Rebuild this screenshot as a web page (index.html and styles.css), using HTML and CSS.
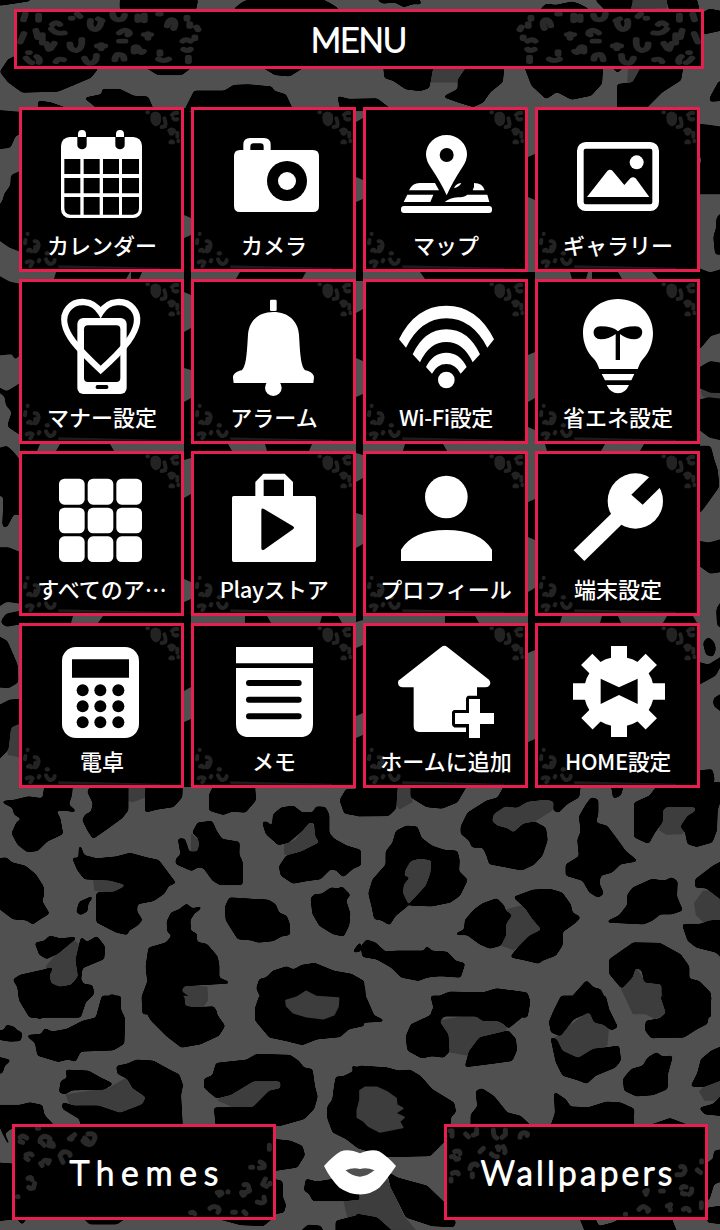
FILE: index.html
```
<!DOCTYPE html>
<html lang="ja">
<head>
    <meta charset="UTF-8">
    <meta name="viewport" content="width=device-width, initial-scale=1.0">
    <title>MENU</title>
    <link rel="stylesheet" href="styles.css">
</head>
<body>
    <!-- leopard wallpaper -->
    <svg class="wallpaper" viewBox="0 0 720 1230" aria-hidden="true">
        <!-- rounds off the corners of the spots -->
        <filter id="soften" x="-5%" y="-5%" width="110%" height="110%" color-interpolation-filters="sRGB">
            <feGaussianBlur stdDeviation="4"/>
            <feComponentTransfer><feFuncA type="linear" slope="7" intercept="-3"/></feComponentTransfer>
        </filter>
        <!-- top -->
        <g transform="scale(.4592 .3333)">
            <path class="mid" d="M1370 0L1455 0 1450 22 1370 25ZM940 207L1020 207 1000 245 940 245ZM1370 207L1400 207 1390 240 1368 250Z"/>
            <path class="spot" d="M264 0L428 0 424 28 264 28ZM512 28L530 8 545 0 700 0 720 14 735 28ZM825 0L835 8 860 4 880 18 900 9 915 10 910 0ZM0 0L65 0 30 8 0 14ZM1180 28L1190 15 1210 18 1245 8 1260 14 1280 28ZM1300 0L1320 28 1370 28 1375 0ZM1455 0L1460 28 1520 28 1515 0ZM1532 40L1545 30 1568 35 1568 90 1532 100Z"/>
            <path class="spot" d="M3 215L20 180 35 170 40 207 210 207 195 232 150 258 125 272 50 275 20 245ZM318 200L415 200 395 222 345 222ZM573 200L660 200 630 226 600 222ZM838 200L940 200 932 262 915 270 885 265 858 240 840 232ZM1020 200L1095 200 1092 245 1065 275 1050 305 1030 318 1000 305 970 290 1000 268 1000 240ZM1145 200L1310 200 1308 250 1285 285 1245 296 1212 272 1190 293 1160 255ZM1335 200L1355 200 1345 214ZM1400 200L1485 200 1480 240 1440 275 1400 330 1347 330 1347 255 1380 250ZM1550 290L1568 245 1568 300 1548 302ZM188 295L225 285 225 270 260 270 290 290 320 292 332 330 220 330ZM405 330L425 275 490 275 510 258 540 256 590 262 595 275 620 285 635 330ZM738 292L760 300 820 298 850 330 745 330ZM86 305L110 310 150 330 86 330Z"/>
        </g>
        <!-- left edge -->
        <g transform="matrix(.3333 0 0 .4656 0 60)">
            <path class="mid" d="M30 1430L57 1420 57 1495 25 1490Z"/>
            <path class="spot" d="M-20 110L67 115 67 155 45 160 30 185 -20 190ZM67 240L35 250 35 270 15 290 10 305 -20 330 -20 375 30 400 67 410ZM-20 460L30 480 67 485 67 625 45 640 40 628 -20 632ZM-20 700L20 715 67 695 67 805 25 785 40 755 20 740 18 722ZM-20 840L20 832 40 845 67 870 67 975 40 972 20 1000 10 1000 14 935 -20 930ZM-20 1050L25 1050 67 1062 67 1165 20 1160 -20 1178ZM5 1207L20 1192 57 1187 95 1195 90 1205 20 1214ZM-20 1235L20 1250 50 1300 52 1335 25 1346 -20 1343ZM-20 1395L30 1377 67 1375 67 1420 30 1430 22 1480 -20 1510Z"/>
        </g>
        <!-- right edge -->
        <g transform="matrix(.3333 0 0 .4656 660 60)">
            <path class="mid" d="M125 705L180 712 180 735 128 720Z"/>
            <path class="spot" d="M108 140L140 142 195 148 195 285 108 285 128 210 108 190ZM195 325L172 340 172 360 163 380 168 415 195 415ZM108 448L150 460 195 450 195 580 150 590 122 615 108 620ZM108 668L150 650 195 655 195 712 150 711 108 698ZM108 735L145 728 195 732 195 815 150 808 108 785ZM90 832L150 832 160 860 170 880 175 915 160 930 140 950 122 968 108 970 108 840ZM108 1035L145 1040 195 1030 195 1095 150 1100 108 1078ZM195 1155L172 1180 174 1213 195 1220ZM132 1252L145 1243 160 1252 165 1265 158 1278 140 1275ZM108 1295L145 1302 195 1280 165 1320 108 1342ZM195 1360L163 1373 163 1385 195 1402ZM108 1530L155 1526 161 1545 150 1570 108 1570Z"/>
        </g>
        <!-- slivers between the tiles -->
        <path class="gap" d="M56 272h74l-4 7h-72zM131 272h11l-3 7h-8zM240 272h66l-4 7h-66zM420 272h115l-5 7h-105zM570 272h18l-2 7h-14zM592 272h26l4 7h-30zM652 272l46 0v7h-40z
            M20 444h20l-3 7h-17zM60 444h50l4 7h-58zM188 444h40l4 7h-44zM265 444h47l-3 7h-42zM405 444h38l4 7h-44zM545 444h60l-4 7h-54zM644 444h56v7h-60z
            M30 616h43l-2 7h-43zM103 616h87v7h-92zM245 616h22l4 7h-26zM322 616h16l4 7h-22zM445 616h30l4 7h-34zM534 616h28l-2 7h-26zM602 616h16l3 7h-21zM667 616h26l4 7h-34z
            M184 108l7 4v106l-7-3zM184 238l7-3v60l-7-3zM184 332l7-4v42l-7-2zM184 402l7-4v60l-7 2zM184 498l7-4v88l-7-3zM184 602l7-3v88l-7 4zM184 722l7-3v68h-7z
            M356 122l7-4v62l-7-3zM356 202l7-3v82h-7zM356 313l7-4v52l-7-3zM356 397l7-3v61l-7-2zM356 482l7-4v37l-7-2zM356 548l7-4v76l-7 2zM356 648l7-3v68l-7 3zM356 738l7-3v53h-7z
            M528 157l7-3v46l-7-3zM528 272h7v80l-7 3zM528 402l7-4v32l-7-3zM528 502l7-3v41l-7-3zM528 592l7-4v62l-7 3zM528 742l7-3v49h-7z"/>
        <!-- lower half, left -->
        <g transform="translate(0 780) scale(.3333)">
            <path class="mid" d="M380 10L445 10 435 50 400 64 380 60ZM282 300L320 292 360 305 385 312 380 322 345 338 285 330ZM855 195L890 180 910 140 935 130 950 165 970 190 900 225 855 222ZM140 560L190 500 220 480 240 500 235 600 205 622 160 622ZM535 615L620 622 622 660 600 690 550 680ZM575 165L598 185 595 215 575 215Z"/>
            <path class="spot" d="M10 66L45 62 85 52 130 58 136 20 215 20 213 45 203 75 224 93 205 90 162 88 178 115 186 160 140 182 112 210 82 213 55 192 38 160 52 128 72 118 45 102 40 82ZM135 10L215 10 205 70 135 70ZM265 35L280 10 382 10 382 90 365 112 320 145 280 173 265 150 250 120 258 105 275 98 282 70ZM440 10L545 10 544 50 520 78 470 86 438 94ZM630 45L645 15 762 15 765 60 735 95 695 92 670 102 630 90ZM1080 30L1040 30 1022 60 1035 98 1080 106ZM-20 240L18 235 35 250 75 260 105 285 128 320 128 352 122 362 145 400 120 415 98 430 80 418 40 415 -20 370ZM240 200L250 228 290 238 350 232 390 222 440 235 475 243 510 290 524 308 505 315 490 340 460 360 410 370 408 395 424 420 410 435 385 450 380 462 350 455 292 425 292 340 345 338 380 320 378 312 330 298 255 295 235 270 220 235 238 238ZM275 352L262 370 260 392 242 402 232 395 240 368ZM537 178L552 178 560 200 565 218 595 218 602 190 595 170 580 158 595 130 635 126 648 155 665 180 716 188 715 225 725 245 725 312 660 312 640 300 612 262 595 258 575 270 530 250 530 238 545 225ZM790 128L802 128 818 150 822 105 845 85 880 80 905 100 940 100 950 82 975 84 985 105 985 160 1000 178 1040 200 1080 212 1080 255 1060 262 1030 288 1010 268 990 265 960 295 920 300 880 308 845 285 840 260 860 230 905 218 965 188 950 170 945 125 925 125 905 150 865 185 835 192 800 160ZM690 355L760 360 805 362 825 375 835 400 858 410 866 430 868 462 845 466 820 480 775 485 755 478 715 475 680 420 678 380ZM935 355L945 345 965 345 995 325 1015 330 1025 322 1048 345 1035 360 1048 400 1045 435 1030 466 1000 460 960 435 940 400ZM560 374L575 388 602 383 580 400 568 420 570 455 588 462 588 488 620 495 650 530 655 555 655 595 685 608 550 615 540 635 570 655 550 660 552 680 600 690 640 682 650 700 430 700 428 650 445 605 440 560 448 505 500 490 520 466 505 455 503 425 515 400 540 390ZM108 490L135 485 150 470 180 478 225 474 170 520 140 534 120 522ZM245 475L260 490 290 472 312 500 310 535 245 562 240 600 250 615 275 618 280 640 255 665 240 710 90 710 60 660 55 620 42 600 60 588 130 572 155 565 145 585 150 612 180 624 215 618 238 590 230 540ZM310 665L335 645 360 655 360 700 310 700ZM1080 490L1062 515 1080 512ZM780 710L788 660 772 625 780 600 800 595 820 575 860 562 880 572 905 558 945 552 1000 575 1055 585 1090 605 1090 710 780 710Z"/>
        </g>
        <!-- lower half, right -->
        <g transform="translate(360 780) scale(.3333)">
            <path class="mid" d="M105 10L155 10 155 65 120 85 102 70ZM392 105L440 78 540 52 582 60 575 90 520 125 460 160 395 140ZM125 310L125 270 160 232 222 235 215 290 160 372 135 365ZM905 85L1012 75 1000 120 965 160 920 162 900 150ZM440 390L500 375 555 445 460 508 425 495ZM1080 330L1030 335 1005 370 1010 405 1035 428 1080 430ZM785 625L825 560 850 600 905 612 910 700 820 700Z"/>
            <path class="spot" d="M-10 10L110 10 105 85 85 105 -10 106ZM155 10L322 10 290 65 245 83 200 78 155 50ZM110 155L140 140 170 142 182 175 215 200 255 213 290 215 296 240 294 275 320 300 310 320 298 345 270 365 215 376 150 374 200 320 215 280 218 238 180 232 150 240 132 270 128 295 145 292 128 312 125 340 142 375 105 405 88 432 65 418 45 415 38 380 28 340 40 300 80 255 80 215 100 190ZM440 10L660 10 655 50 620 70 595 95 583 90 585 62 560 55 500 62 470 80 435 75 398 100 392 125 410 140 440 148 460 162 490 135 525 128 555 145 560 180 545 225 520 252 485 268 390 250 382 225 370 200 338 200 330 180 305 160 305 140 325 100 380 65 415 55ZM755 10L790 10 780 45 762 52ZM695 55L712 60 712 100 705 130 740 140 770 180 795 215 828 242 780 250 755 275 720 285 715 310 728 340 715 350 690 335 670 300 620 285 620 255 660 230 655 180 665 155 660 110 680 75ZM825 70L870 50 900 10 1090 10 1080 60 1070 90 1068 150 1055 185 1010 198 985 190 978 155 965 140 985 110 1010 95 1010 78 920 76 905 90 905 125 880 160 865 188 825 170ZM370 372L410 358 430 378 435 395 452 405 435 430 435 465 420 495 390 503 360 490 322 462 290 462 315 450 318 420 345 390ZM465 352L520 332 570 330 605 340 630 375 635 400 658 412 640 430 605 455 605 495 585 525 545 540 535 548 495 538 455 530 475 505 510 470 550 450 520 415 500 385ZM820 325L875 300 915 305 935 295 950 305 948 350 965 390 935 400 900 400 875 420 850 430 745 425 780 408 805 375 805 345ZM1090 245L1060 260 1008 300 1008 320 1040 322 1090 360ZM970 435L1020 435 1050 425 1090 422 1090 535 1070 515 1010 500 985 480ZM5 500L20 482 45 490 75 518 110 515 195 515 200 502 215 515 260 518 285 545 312 552 300 590 240 585 200 590 175 600 125 590 95 560 50 535 10 528ZM750 540L800 505 820 490 900 492 960 525 985 560 985 598 1015 605 1050 640 1050 710 910 710 908 610 855 604 848 570 825 558 815 590 785 622 750 580ZM-10 600L12 620 15 660 30 700 -10 700ZM215 700L240 650 270 638 370 640 410 628 500 640 508 665 500 710ZM590 700L640 650 680 605 700 625 720 630 735 660 740 710Z"/>
        </g>
        <!-- bottom, left -->
        <g transform="translate(0 1000) scale(.3333)">
            <path class="mid" d="M200 285L330 265 380 235 440 290 430 320 360 345 300 320 210 312ZM550 -10L615 -10 610 20 560 25ZM655 300L690 285 750 240 850 235 850 265 810 275 765 325 700 320ZM1030 590L1080 585 1080 655 1045 655Z"/>
            <path class="spot" d="M75 -10L260 -10 240 30 200 44 160 42 115 54 95 35ZM308 -10L360 -10 360 30 372 55 370 130 340 148 240 152 225 182 205 175 175 183 115 165 108 128 85 108 125 105 135 88 155 98 200 90 250 65 290 55ZM-10 95L15 92 20 78 40 82 48 92 64 100 60 120 30 122 -10 115ZM-10 172L28 182 12 195 5 218 -10 218ZM430 -10L550 -10 552 20 580 25 640 22 652 50 672 78 655 105 600 130 545 140 500 105 455 60 435 25ZM780 -10L1090 -10 1090 75 1045 85 1020 108 950 115 908 132 860 120 810 110 768 60 768 25ZM200 212L265 215 300 235 335 252 310 266 215 268 195 280 180 275 185 245 205 235ZM352 200L380 195 410 182 460 185 505 210 535 225 546 255 540 285 545 375 245 375 240 355 190 325 190 310 220 320 295 320 360 342 430 315 442 290 400 262 385 235 355 220ZM-10 318L60 318 90 310 125 318 130 345 160 378 40 378 10 400 25 430 -10 355ZM615 238L640 228 650 192 740 182 770 165 870 168 895 185 910 205 935 210 942 260 950 290 940 325 910 355 840 375 650 375 645 325 760 325 810 275 845 268 845 240 760 240 690 282 650 292 615 262ZM820 420L870 425 905 440 912 465 890 500 820 510ZM820 540L845 545 845 590 855 615 850 635 820 640ZM920 540L950 548 1000 540 1080 580 1080 595 1030 600 940 600 930 580 915 570ZM-10 490L45 495 45 655 -10 660ZM250 650L380 650 350 670 270 670ZM640 650L820 650 790 675 720 672ZM905 695L925 677 960 680 968 695ZM1010 665L1090 645 1090 700 1010 700ZM50 650L80 650 66 670Z"/>
            <path class="mid" d="M858 2L890 -8 918 -26 950 -10 1016 -6 1014 20 1002 44 970 56 920 50 880 38 860 18Z"/>
        </g>
        <!-- bottom, right -->
        <g transform="translate(360 1000) scale(.3333)">
            <path class="mid" d="M235 65L350 42 440 65 435 100 355 120 325 165 270 155ZM585 115L690 32 745 80 740 135 655 178 600 165ZM815 -10L910 -10 920 40 885 55 850 35ZM1080 245L1040 255 1020 275 1035 300 1060 300 1080 290ZM0 585L80 540 130 650 165 690 80 690 0 645Z"/>
            <path class="spot" d="M-10 -10L15 -10 40 48 68 62 -10 66ZM215 -10L505 -10 490 45 445 82 432 68 410 58 370 60 350 46 250 46 235 65 262 105 265 155 250 170 215 165 185 172 145 150 140 110 155 75 210 50 225 30ZM360 115L445 95 465 118 468 150 455 180 400 188 318 198 330 155ZM605 -10L735 -10 745 30 770 80 755 88 730 70 705 65 690 32 640 55 600 105 575 95 570 65 585 30ZM575 115L588 120 605 155 655 178 700 150 740 145 775 140 780 180 765 200 705 225 680 248 655 238 610 225 590 185ZM905 -10L1052 -10 1040 70 1010 85 970 110 925 110 875 112 858 90 860 65 900 58 922 40ZM-70 232L-50 232 -15 215 -22 200 -8 206 0 200 80 205 115 215 150 212 180 230 215 270 280 310 285 335 270 350 270 370 250 385 250 425 210 465 80 468 -5 442 -40 415 -80 395 -95 355 -95 320 -80 300 -75 260ZM865 175L890 160 905 172 935 170 920 225 920 265 880 282 830 286 795 270 792 238 815 210 850 200ZM1090 140L1055 155 1025 180 1015 220 996 257 1030 258 1090 235ZM1090 285L1060 315 1022 325 1035 340 1090 345ZM350 275L365 268 400 290 440 340 480 350 510 378 335 378 335 345 355 320ZM585 280L615 300 630 322 685 325 740 308 780 310 820 328 818 378 575 378 588 340ZM870 378L930 357 985 378ZM85 520L110 535 200 560 252 610 252 645 285 665 280 678 215 675 140 650 115 600 95 560ZM-10 645L50 655 100 700 -10 700ZM660 650L700 650 715 682 760 670 800 650 930 650 950 700 680 700ZM1045 490L1062 478 1065 455 1090 450 1090 540 1060 550 1045 600ZM1045 625L1090 620 1090 670 1045 665Z"/>
            <path class="mid" d="M-8 330L0 300 0 272 15 262 50 262 80 275 108 295 110 315 128 325 106 340 132 352 118 365 128 382 60 396 25 378 10 362 -8 352Z"/>
        </g>
    </svg>

    <!-- shared corner pattern of the tiles -->
    <svg class="defs" aria-hidden="true">
        <symbol id="tile-spots" viewBox="66 30 477 477">
            <g class="fleck thin">
                <path d="M458 45q8-8 18 0q5 24-8 28q-14-5-10-28M467 50v10M493 55q6 16 2 24l-10 2M516 45q6-8 16-6M520 55q6 6 12 2M508 92q8-6 14 0q-4 12-10 8M532 98v12M511 127q4-6 8 0M535 122v2M442 37h2"/>
                <path d="M83 401v1M76 420l-1 10M104 424q10-2 12 12q-4 20-12 18l2-14M84 452q6-6 10 2M140 460q2-2 4 0M138 478q6 16 16 14q10-4 10-12M80 487q10-6 18 0M94 495l-3 4M118 480l-2 4"/>
            </g>
            <path class="streak" d="M175 496L480 503 480 507 175 505Z"/>
        </symbol>
        <symbol id="bar-spots" viewBox="0 0 420 165" preserveAspectRatio="none">
            <g class="fleck" transform="translate(-37 -36)">
                <path d="M55 42l-4 18M84 45v16M114 74q10-10 16 0M112 88q8 16 28 12M155 55h2M168 42l6 8M197 62q-3 18 5 26q10 6 16-12l2-10M214 57l8 6M245 42q2 18 14 18q10 0 12-14M300 48v14M314 45v18M345 42h4M364 78q2-20 12-18q8 8 2 26M407 52v6M413 72v8M428 82l3 8M424 112v6M52 102l-8 26M78 92l4 22M92 105v26"/>
                <path d="M101 132l5 18M118 132l-8 16M152 134q0 18 14 20q14-5 12-34M260 100q10-14 20-4q4 8-2 10M260 125h12M314 105h14M322 102v14M212 140h16M220 136v12M292 158v-14q10-6 12 14q6 4 8-2M398 125q6-8 16 0M400 150q10 8 14 0M348 157v8M345 180q12 8 22 0M62 160h2M57 177q8 14 12 14M80 172q8 8 5 18M122 188q4-12 16-6M184 177q4 16 12 16q14-2 14-24M250 182q2-18 8-16q12 0 12 14M410 174v14"/>
            </g>
        </symbol>
    </svg>

    <div class="screen">
        <header class="bar">
            <svg class="bar-deco"><use href="#bar-spots"/></svg>
            <svg class="bar-deco flip"><use href="#bar-spots"/></svg>
            <svg class="lettering" width="110" height="54"><text x="7" y="40" textLength="96">MENU</text></svg>
        </header>

        <main class="grid">
            <a class="tile">
                <svg class="deco"><use href="#tile-spots"/></svg>
                <svg class="icon" viewBox="66 30 477 354">
                    <rect x="183" y="111" width="243" height="243" rx="26"/>
                    <path class="cut" d="M193 177h48v45h-48zM251 177h48v45h-48zM309 177h48v45h-48zM366 177h51v45h-51zM193 234h48v46h-48zM251 234h48v46h-48zM309 234h48v46h-48zM366 234h51v46h-51zM193 291h48v53h-30q-18-2-18-20zM251 291h48v53h-48zM309 291h48v53h-48zM366 291h51v33q0 18-18 20h-33z"/>
                    <path class="cut" d="M232 111h28v24a14 13 0 0 1-28 0zM346 111h28v24a14 13 0 0 1-28 0z"/>
                    <path d="M234 111v-9a12 12 0 0 1 24 0v9zM348 111v-9a12 12 0 0 1 24 0v9z"/>
                </svg>
                <span>カレンダー</span>
            </a>
            <a class="tile">
                <svg class="deco"><use href="#tile-spots"/></svg>
                <svg class="icon" viewBox="582 30 477 354">
                    <path d="M702 168q0-18 18-18h10v-16q0-20 20-20h42q20 0 20 20v16h127q18 0 18 18v150q0 18-18 18H720q-18 0-18-18z"/>
                    <path class="cut" d="M751 150v-10q0-10 10-10h20q10 0 10 10v10z"/>
                    <circle class="cut" cx="861" cy="243" r="60"/>
                    <circle cx="861" cy="243" r="27"/>
                </svg>
                <span>カメラ</span>
            </a>
            <a class="tile">
                <svg class="deco"><use href="#tile-spots"/></svg>
                <svg class="icon" viewBox="18 30 477 354">
                    <path d="M147 271q10-22 32-22h46l12 22zM142 284h78l-9 22h-80zM342 249q26 0 32 22h-36q6-10 4-22zM322 284h60l6 22H254q14-12 40-14 18 0 28-8z"/>
                    <rect x="123" y="318" width="273" height="21" rx="9"/>
                    <path d="M260 286q-16-36-48-84-14-20-14-39a61.500 58 0 0 1 123 0q0 19-14 39-30 46-47 84z"/>
                    <path d="M282 265q4-14 22-16-4 10-22 16z"/>
                    <circle class="cut" cx="260" cy="165" r="21"/>
                </svg>
                <span>マップ</span>
            </a>
            <a class="tile">
                <svg class="deco"><use href="#tile-spots"/></svg>
                <svg class="icon" viewBox="534 30 477 354">
                    <rect class="line" x="661" y="136" width="226" height="187" rx="16" stroke-width="20"/>
                    <circle cx="830" cy="187" r="21"/>
                    <path d="M681 291l61-78q8-8 16 0l35 42 18-20q8-7 16 0l41 56z"/>
                </svg>
                <span>ギャラリー</span>
            </a>

            <a class="tile">
                <svg class="deco"><use href="#tile-spots"/></svg>
                <svg class="icon" viewBox="66 546 477 354">
                    <rect x="232" y="654" width="148" height="228" rx="18"/>
                    <rect class="cut" x="252" y="676" width="109" height="170" rx="12"/>
                    <rect class="cut" x="287" y="855" width="38" height="12" rx="5"/>
                    <path class="line" stroke-width="19" d="M302 637C278 598 228 598 205 625C182 652 194 690 220 725C245 757 275 785 302 810C330 785 360 757 384 725C409 690 422 652 399 625C376 598 326 598 302 637Z"/>
                </svg>
                <span>マナー設定</span>
            </a>
            <a class="tile">
                <svg class="deco"><use href="#tile-spots"/></svg>
                <svg class="icon" viewBox="582 546 477 354">
                    <rect x="810" y="599" width="20" height="34" rx="4"/>
                    <path d="M820 636c46 0 74 28 77 68 3 46 4 95 19 107 18 4 26 12 26 22l-2 16H701l-2-16c0-10 8-18 26-22 15-12 16-61 19-107 3-40 30-68 76-68z"/>
                    <circle cx="820" cy="863" r="25"/>
                </svg>
                <span>アラーム</span>
            </a>
            <a class="tile">
                <svg class="deco"><use href="#tile-spots"/></svg>
                <svg class="icon" viewBox="18 546 477 354">
                    <path d="M117 718Q166 617 259 617T402 718L382 743Q336 655 259 655T138 743zM158 763Q193 688 259 688T360 763L338 787Q310 726 259 726T180 787zM198 801Q219 758 259 758T320 801L302 821Q287 792 259 792T216 821z"/>
                    <circle cx="259" cy="840" r="25"/>
                </svg>
                <span class="narrow">Wi-Fi設定</span>
            </a>
            <a class="tile">
                <svg class="deco"><use href="#tile-spots"/></svg>
                <svg class="icon" viewBox="534 546 477 354">
                    <path d="M774 597c60 0 105 45 105 102 0 30-12 60-30 78-8 8-12 20-16 30H718c-4-10-8-22-16-30-20-18-33-48-33-78 0-57 45-102 105-102zM725 822h98l-9 19h-79zM740 855h67q-10 24-33 25-23-1-34-25z"/>
                    <path class="cut" d="M774 694q-16-15-52-15c-30 0-26 39 0 39q24 0 45-16v78h13v-78q20 16 44 16c28 0 32-39 2-39q-36 0-52 15z"/>
                </svg>
                <span>省エネ設定</span>
            </a>

            <a class="tile">
                <svg class="deco"><use href="#tile-spots"/></svg>
                <svg class="icon" viewBox="66 27 477 354">
                    <rect x="177" y="101" width="77" height="78" rx="16"/><rect x="263" y="101" width="77" height="78" rx="16"/><rect x="349" y="101" width="77" height="78" rx="16"/>
                    <rect x="177" y="188" width="77" height="77" rx="16"/><rect x="263" y="188" width="77" height="77" rx="16"/><rect x="349" y="188" width="77" height="77" rx="16"/>
                    <rect x="177" y="274" width="77" height="77" rx="16"/><rect x="263" y="274" width="77" height="77" rx="16"/><rect x="349" y="274" width="77" height="77" rx="16"/>
                </svg>
                <span>すべてのア…</span>
            </a>
            <a class="tile">
                <svg class="deco"><use href="#tile-spots"/></svg>
                <svg class="icon" viewBox="582 27 477 354">
                    <path d="M696 158q0-5 5-5h65v-42l24-25h64l25 25v42h64q5 0 5 5v188q0 5-5 5H701q-5 0-5-5z"/>
                    <path class="cut" d="M791 104h61v49h-61zM784 196q0-8 8-4l87 52q6 4 0 9l-87 61q-8 4-8-4z"/>
                </svg>
                <span class="narrow">Playストア</span>
            </a>
            <a class="tile">
                <svg class="deco"><use href="#tile-spots"/></svg>
                <svg class="icon" viewBox="18 27 477 354">
                    <circle cx="259" cy="156" r="64"/>
                    <path d="M123 348v-34q36-59 136-59t137 59v34z"/>
                </svg>
                <span>プロフィール</span>
            </a>
            <a class="tile">
                <svg class="deco"><use href="#tile-spots"/></svg>
                <svg class="icon" viewBox="534 27 477 354">
                    <circle cx="826" cy="168" r="83"/>
                    <path d="M641 316l125-122 32 32-125 122z"/>
                    <path class="cut" d="M814 149l70-69 36 28-72 71z"/>
                </svg>
                <span>端末設定</span>
            </a>

            <a class="tile">
                <svg class="deco"><use href="#tile-spots"/></svg>
                <svg class="icon" viewBox="66 543 477 354">
                    <rect x="186" y="606" width="231" height="273" rx="42"/>
                    <path class="cut" d="M216 643h171v55H216z"/>
                    <g class="cut">
                        <circle cx="248" cy="736" r="18"/><circle cx="301" cy="736" r="18"/><circle cx="355" cy="736" r="18"/>
                        <circle cx="248" cy="784" r="18"/><circle cx="301" cy="784" r="18"/><circle cx="355" cy="784" r="18"/>
                        <circle cx="248" cy="832" r="18"/><circle cx="301" cy="832" r="18"/><circle cx="355" cy="832" r="18"/>
                    </g>
                </svg>
                <span>電卓</span>
            </a>
            <a class="tile">
                <svg class="deco"><use href="#tile-spots"/></svg>
                <svg class="icon" viewBox="582 543 477 354">
                    <path d="M708 606h231v49H708zM708 669h231v167q0 40-40 40H748q-40 0-40-40z"/>
                    <path class="rule" d="M747 714h149M747 764h149M747 814h149"/>
                </svg>
                <span>メモ</span>
            </a>
            <a class="tile">
                <svg class="deco"><use href="#tile-spots"/></svg>
                <svg class="icon" viewBox="18 543 477 354">
                    <path d="M245 605q8-5 16 0l126 99q8 10 0 19-4 4-12 4h-24v134H178q-17 0-17-17V727h-33q-18-3-13-20z"/>
                    <path class="cut" d="M324 752h42v110h-48v-14h-34q-8-2-8-10v-34q0-8 8-9h34v-33q0-8 6-10z"/>
                    <path d="M327 762h33v42h42v33h-42v42h-33v-42h-42v-33h42z"/>
                    <path d="M283 848h35v13h-35z"/>
                </svg>
                <span>ホームに追加</span>
            </a>
            <a class="tile">
                <svg class="deco"><use href="#tile-spots"/></svg>
                <svg class="icon" viewBox="534 543 477 354">
                    <circle cx="777" cy="740" r="105"/>
                    <path d="M753 603h48v273h-48zM639 715h276v49H639z"/>
                    <path d="M753 603h48v273h-48zM640 716h274v48H640z" transform="rotate(45 777 740)"/>
                    <path class="cut" d="M722 701l55 26 56-26v76l-56-27-55 27z"/>
                </svg>
                <span class="narrow">HOME設定</span>
            </a>
        </main>

        <footer class="dock">
            <a class="dock-btn">
                <svg class="deco" viewBox="45 381 774 270">
                    <path class="fleck" d="M60 412q10-8 20 2M60 425l8 2M120 425q0-13 12-16q12 0 18 8M127 430l6 6M147 427q14 0 13 12l-13-2M208 416l16-12M214 412q-2 8 2 4M264 402q20-4 21 10q-4 18-16 22q-14-2-20-12M254 414l10 10M78 465q14-8 18 0M78 474l6 5M180 468q6-16 20-12q12 4 10 10M184 477l5 10M130 484q4-6 18-2l-4 8M122 490l4 6M84 535q10-6 12 4M104 550l-4 14q-10 4-14-2M52 590h2M112 385h4M808 436v12M780 486q16 4 12 16l-14 2M752 502h6M796 537l-8 16 12 6M810 550v2M732 554q16-2 14 12q8 8-8 10q-8 14-10 8q-8-10 2-6M652 578q12-4 14 2l-8 6M684 575v1M792 592l2 12q-6 8-22 2M630 625q10-10 24-2q6 6 0 14M572 638q8-4 12 4M698 637h8M732 635l6 6"/>
                </svg>
                <svg class="lettering" width="190" height="60"><text x="21" y="42" textLength="148">Themes</text></svg>
            </a>
            <svg class="lips" viewBox="973 450 214 136">
                <path fill-rule="evenodd" d="M973 500Q1000 470 1022 457Q1045 447 1080 462Q1116 447 1138 457Q1162 472 1187 500Q1160 540 1138 564Q1114 584 1080 585Q1046 584 1018 564Q990 535 973 500ZM1037 513Q1060 503 1080 509Q1100 503 1123 513Q1100 531 1080 532Q1055 530 1037 513Z"/>
            </svg>
            <a class="dock-btn">
                <svg class="deco" viewBox="261 381 774 270">
                    <path class="fleck" d="M270 392h6v16M317 402l8 8M350 388v13l-10 4M400 390q0 20 10 24M436 390v14l-10 8M480 412q0-15 14-14q12 2 7 8M284 455q15-6 16 6M274 470q10-2 14 8l8-2M360 455l10-10M412 441q8-2 4 8M430 440q8 12 4 18M394 462q10 10 18 8M277 520q16-8 18 2M273 537v6M330 506q2-16 18-14l4 4M337 522v8M962 500q14-2 13 12q-4 12-12 12q-10 0-12 0M1012 510l10 8M1025 482v4M854 575l8-4-4 12M902 573h8M964 565q4-8 14-4M967 580l8 2M995 567q2 10-8 16M837 628q10-14 22-4q12 6 4 10M922 618l10-4M931 627v3M970 628q14-8 18 4M1024 608v15M796 643h1M905 549h6"/>
                </svg>
                <svg class="lettering" width="220" height="60"><text x="15" y="42" textLength="191">Wallpapers</text></svg>
            </a>
        </footer>
    </div>
</body>
</html>
```
FILE: styles.css
```
* {
    margin: 0;
    padding: 0;
    box-sizing: border-box;
}
body {
    width: 720px;
    height: 1230px;
    background: #505050;
    font-family: "Noto Sans CJK JP", "Noto Sans", sans-serif;
    color: #fff;
    overflow: hidden;
}
svg {
    display: block;
}
.wallpaper {
    position: absolute;
    left: 0;
    top: 0;
    width: 720px;
    height: 1230px;
    z-index: -1;
}
.spot {
    fill: #000;
    stroke: #000;
    stroke-width: 7;
    stroke-linejoin: round;
    filter: url(#soften);
}
.mid {
    fill: #3d3d3d;
    stroke: #3d3d3d;
    stroke-width: 5;
    stroke-linejoin: round;
}
.gap {
    fill: #000;
}
.defs {
    position: absolute;
    width: 0;
    height: 0;
}
.fleck {
    fill: none;
    stroke: #292929;
    stroke-width: 15;
    stroke-linecap: round;
    stroke-linejoin: round;
}
.fleck.thin {
    stroke: #232323;
    stroke-width: 12;
}
.streak {
    fill: #1c1c1c;
}
.screen {
    height: 1230px;
    padding-top: 9px;
    display: flex;
    flex-direction: column;
}
.bar {
    position: relative;
    width: 690px;
    height: 60px;
    margin-left: 14px;
    background: #000;
    border: 3px solid #e91e50;
    display: flex;
    justify-content: center;
}
.bar-deco {
    position: absolute;
    left: 0;
    top: 0;
    width: 193px;
    height: 54px;
}
.bar-deco.flip {
    left: auto;
    right: 0;
    transform: scaleX(-1);
}
/* rounded titles */
.lettering {
    position: relative;
    overflow: visible;
}
.lettering text {
    font-family: Lato, sans-serif;
    font-size: 33px;
    font-weight: 300;
    fill: #fff;
    stroke: #fff;
    stroke-width: 1.9;
    stroke-linejoin: round;
}
.grid {
    display: grid;
    grid-template-columns: repeat(4, 165px);
    grid-auto-rows: 165px;
    gap: 7px;
    margin: 38px 0 0 19px;
}
.tile {
    position: relative;
    background: #000;
    border: 3px solid #e91e50;
    display: flex;
    flex-direction: column;
    align-items: center;
}
.deco {
    position: absolute;
    left: 0;
    top: 0;
    width: 100%;
    height: 100%;
}
.icon {
    position: relative;
    width: 159px;
    height: 118px;
    fill: #fff;
    flex: none;
}
.icon .cut {
    fill: #000;
}
.icon .line {
    fill: none;
    stroke: #fff;
}
.icon .rule {
    stroke: #000;
    stroke-width: 18;
    stroke-linecap: round;
}
.tile span {
    position: relative;
    padding-left: 1px;
    font-size: 22px;
    line-height: 32px;
    font-weight: 500;
    white-space: nowrap;
}
.tile .narrow {
    letter-spacing: -0.4px;
}
.dock {
    margin-top: auto;
    padding: 0 12px 10px;
    display: flex;
    justify-content: space-between;
    align-items: center;
}
.dock-btn {
    position: relative;
    width: 264px;
    height: 96px;
    background: #000;
    border: 3px solid #e91e50;
    display: flex;
    justify-content: center;
    align-items: center;
}
.dock-btn .lettering {
    margin-top: 2px;
}
.lips {
    width: 72px;
    height: 46px;
    fill: #fff;
}
```
